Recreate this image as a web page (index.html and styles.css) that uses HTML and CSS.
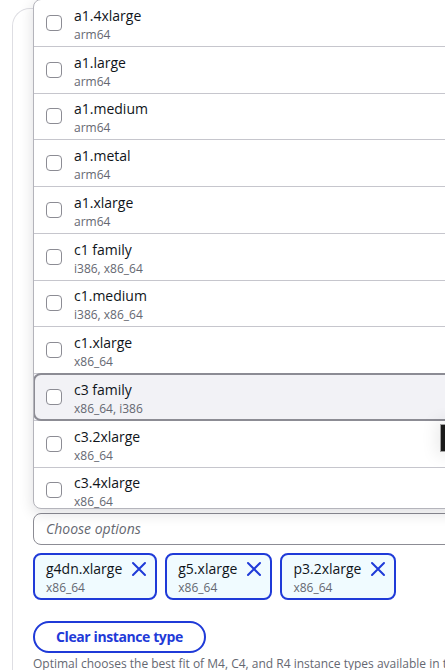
FILE: index.html
```html
<!DOCTYPE html>
<html lang="en">
<head>
<meta charset="utf-8">
<title>Instance types</title>
<link rel="stylesheet" href="styles.css">
</head>
<body>
<div class="page">
  <div class="card">
    <div class="hidden-content"></div>
    <div class="field">
      <div class="trigger-wrap">
        <div class="dropdown">
          <ul class="options">
            <li class="option"><span class="checkbox"></span><span class="opt-text"><span class="opt-label">a1.4xlarge</span><span class="opt-desc">arm64</span></span></li>
            <li class="option"><span class="checkbox"></span><span class="opt-text"><span class="opt-label">a1.large</span><span class="opt-desc">arm64</span></span></li>
            <li class="option"><span class="checkbox"></span><span class="opt-text"><span class="opt-label">a1.medium</span><span class="opt-desc">arm64</span></span></li>
            <li class="option"><span class="checkbox"></span><span class="opt-text"><span class="opt-label">a1.metal</span><span class="opt-desc">arm64</span></span></li>
            <li class="option"><span class="checkbox"></span><span class="opt-text"><span class="opt-label">a1.xlarge</span><span class="opt-desc">arm64</span></span></li>
            <li class="option"><span class="checkbox"></span><span class="opt-text"><span class="opt-label">c1 family</span><span class="opt-desc">i386, x86_64</span></span></li>
            <li class="option"><span class="checkbox"></span><span class="opt-text"><span class="opt-label">c1.medium</span><span class="opt-desc">i386, x86_64</span></span></li>
            <li class="option"><span class="checkbox"></span><span class="opt-text"><span class="opt-label">c1.xlarge</span><span class="opt-desc">x86_64</span></span></li>
            <li class="option option-highlighted"><span class="checkbox"></span><span class="opt-text"><span class="opt-label">c3 family</span><span class="opt-desc">x86_64, i386</span></span></li>
            <li class="option"><span class="checkbox"></span><span class="opt-text"><span class="opt-label">c3.2xlarge</span><span class="opt-desc">x86_64</span></span></li>
            <li class="option"><span class="checkbox"></span><span class="opt-text"><span class="opt-label">c3.4xlarge</span><span class="opt-desc">x86_64</span></span></li>
          </ul>
        </div>
        <div class="trigger">Choose options</div>
      </div>
      <div class="tokens">
        <div class="token">
          <div class="token-text"><span class="token-label">g4dn.xlarge</span><span class="token-desc">x86_64</span></div>
          <span class="token-dismiss"><svg viewBox="0 0 16 16" width="16" height="16"><path d="M2 2l12 12M14 2L2 14" fill="none" stroke="currentColor" stroke-width="2" stroke-linecap="round"/></svg></span>
        </div>
        <div class="token">
          <div class="token-text"><span class="token-label">g5.xlarge</span><span class="token-desc">x86_64</span></div>
          <span class="token-dismiss"><svg viewBox="0 0 16 16" width="16" height="16"><path d="M2 2l12 12M14 2L2 14" fill="none" stroke="currentColor" stroke-width="2" stroke-linecap="round"/></svg></span>
        </div>
        <div class="token">
          <div class="token-text"><span class="token-label">p3.2xlarge</span><span class="token-desc">x86_64</span></div>
          <span class="token-dismiss"><svg viewBox="0 0 16 16" width="16" height="16"><path d="M2 2l12 12M14 2L2 14" fill="none" stroke="currentColor" stroke-width="2" stroke-linecap="round"/></svg></span>
        </div>
      </div>
    </div>
    <button class="clear-btn" type="button">Clear instance type</button>
    <p class="hint">Optimal chooses the best fit of M4, C4, and R4 instance types available in the Region.</p>
  </div>
</div>
<div class="edge-popover"></div>
</body>
</html>
```

FILE: styles.css
```css
html, body {
  margin: 0;
  padding: 0;
  background: #ffffff;
  overflow: hidden;
}

body {
  font-family: "Open Sans", "Noto Sans", Arial, sans-serif;
  color: #0f141a;
  width: 445px;
  height: 670px;
  position: relative;
}

.page {
  padding: 8px 0 0 12px;
}

.card {
  width: 700px;
  height: 720px;
  border-top: 1px solid #dedee3;
  border-left: 1px solid #dedee3;
  border-radius: 18px 0 0 0;
  padding-left: 20px;
  box-sizing: border-box;
}

.hidden-content {
  height: 504px;
}

.field {
  width: 520px;
}

.trigger-wrap {
  position: relative;
}

.dropdown {
  position: absolute;
  left: 0;
  right: 0;
  bottom: calc(100% + 4px);
  height: 510px;
  box-sizing: border-box;
  border: 1px solid #b4b4bb;
  border-radius: 8px;
  background: #ffffff;
  overflow: hidden;
  box-shadow: 0 4px 14px 1px rgba(0, 7, 22, 0.12);
  z-index: 2;
}

.options {
  list-style: none;
  margin: 0;
  padding: 0;
}

.option {
  position: relative;
  box-sizing: border-box;
  height: 46.75px;
  border-bottom: 1px solid #c6c6cd;
  display: flex;
  align-items: center;
  gap: 12px;
  padding-left: 12px;
}

.option-highlighted {
  background: #f2f2f6;
}

.option-highlighted::after {
  content: "";
  position: absolute;
  top: -1px;
  bottom: -1px;
  left: -1px;
  right: -1px;
  border: 2px solid #8c8c94;
  border-radius: 8px;
}

.checkbox {
  width: 16px;
  height: 16px;
  box-sizing: border-box;
  border: 1.5px solid #8c8c94;
  border-radius: 4px;
  background: #ffffff;
  flex: none;
}

.opt-text {
  display: flex;
  flex-direction: column;
  padding-top: 2px;
}

.opt-label {
  font-size: 14px;
  line-height: 22px;
}

.opt-desc {
  font-size: 12px;
  line-height: 16px;
  color: #656871;
}

.trigger {
  box-sizing: border-box;
  height: 32px;
  border: 1px solid #8c8c94;
  border-radius: 8px;
  padding: 4px 12px;
  font-size: 14px;
  line-height: 22px;
  font-style: italic;
  color: #656871;
  background: #ffffff;
}

.tokens {
  display: flex;
  gap: 8px;
  margin-top: 8px;
}

.token {
  display: flex;
  align-items: flex-start;
  gap: 9px;
  border: 2px solid #1f3ad8;
  border-radius: 8px;
  background: #f0fbff;
  padding: 3px 8px 2px 11px;
}

.token-text {
  display: flex;
  flex-direction: column;
}

.token-label {
  font-size: 14px;
  line-height: 22px;
}

.token-desc {
  font-size: 12px;
  line-height: 16px;
  color: #656871;
}

.token-dismiss {
  color: #1f3ad8;
  height: 22px;
  display: flex;
  align-items: center;
}

.token-dismiss svg {
  display: block;
}

.clear-btn {
  display: block;
  margin-top: 21px;
  box-sizing: border-box;
  height: 32px;
  padding: 3px 21px;
  border: 2px solid #1f3ad8;
  border-radius: 20px;
  background: #ffffff;
  color: #1f3ad8;
  font-family: inherit;
  font-size: 14px;
  line-height: 22px;
  font-weight: 700;
  letter-spacing: -0.4px;
}

.hint {
  margin: 3px 0 0;
  font-size: 12px;
  line-height: 16px;
  color: #656871;
  white-space: nowrap;
}

.edge-popover {
  position: absolute;
  left: 440px;
  top: 424px;
  width: 12px;
  height: 28px;
  box-sizing: border-box;
  background: #1a1a1a;
  border: 1px solid #a0a0a0;
  box-shadow: 0 0 16px 4px rgba(0, 0, 0, 0.08);
  z-index: 3;
}
```
